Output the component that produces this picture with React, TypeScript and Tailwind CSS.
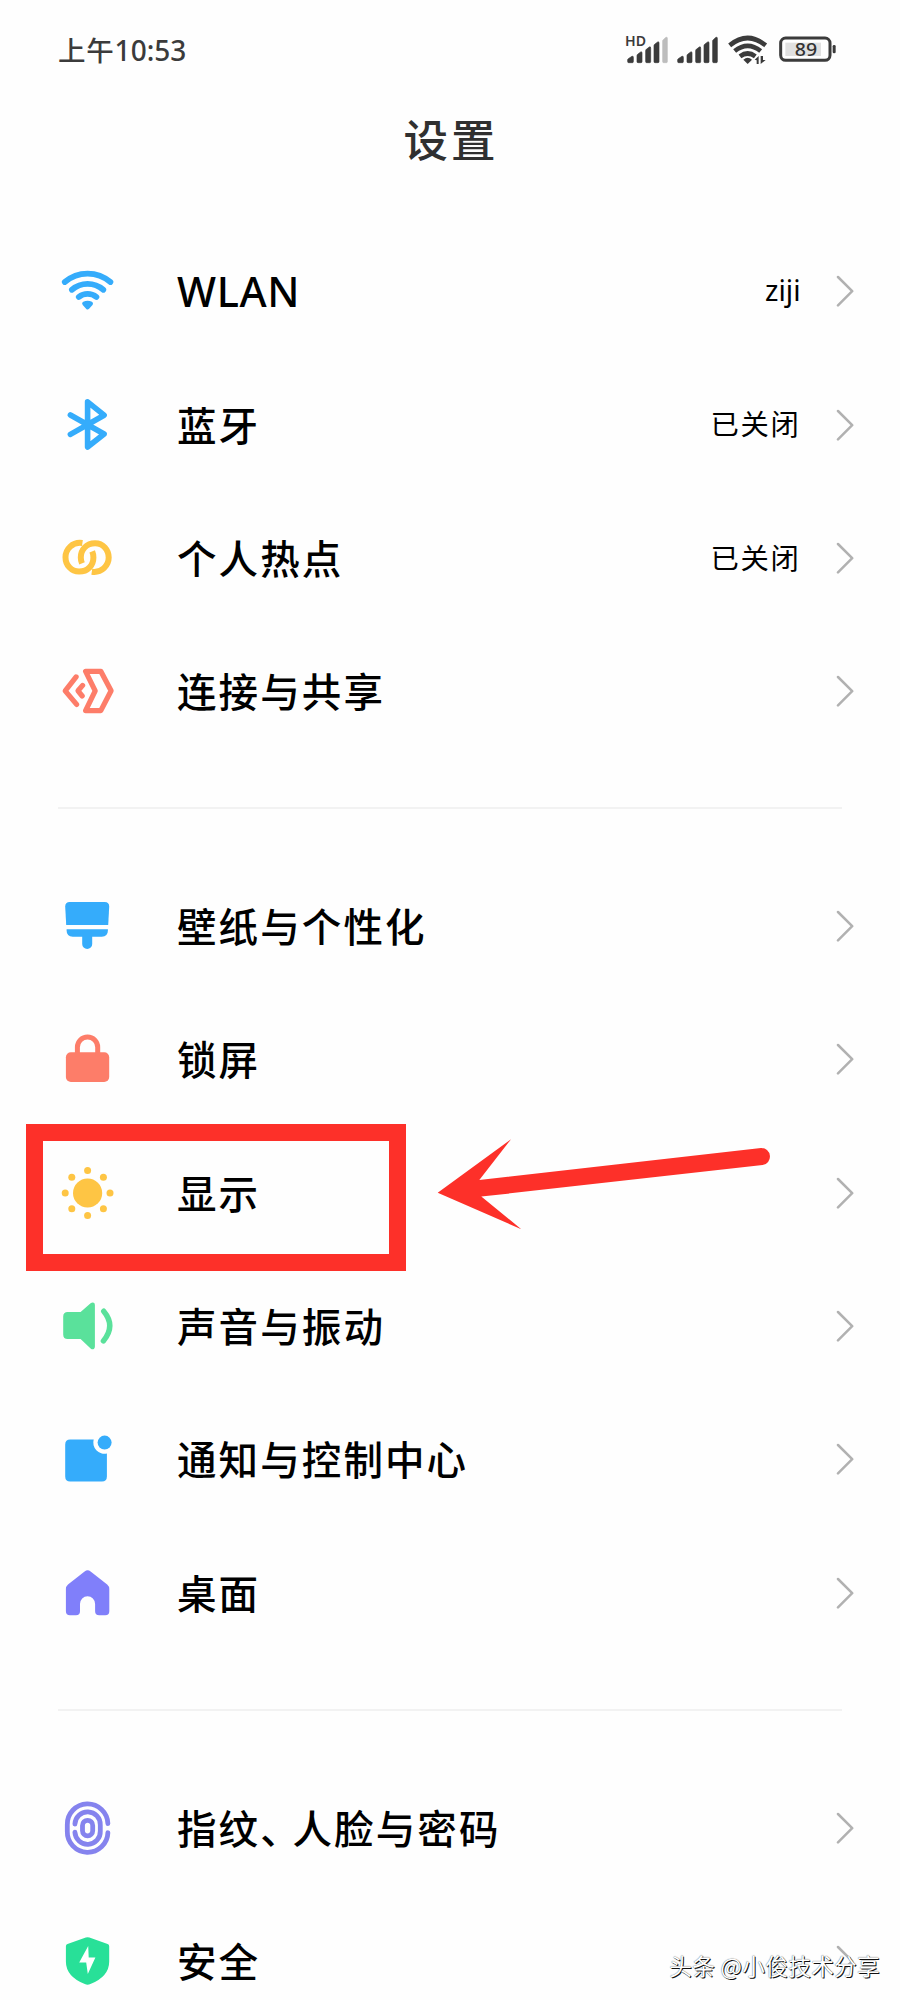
import type { ReactNode } from "react";

const BLUE = "#35acfb";
const YELLOW = "#fec544";
const CORAL = "#fd7d69";
const VIOLET = "#807ffa";

function Icon({ children }: { children: ReactNode }) {
  return (
    <svg className="h-[60px] w-[60px] shrink-0" viewBox="-30.4 -30 60 60" fill="none" strokeLinecap="round" strokeLinejoin="round">
      {children}
    </svg>
  );
}

const WifiIcon = () => (
  <Icon>
    <g stroke={BLUE} strokeWidth="5.8">
      <path d="M-22.6 -9A35 35 0 0 1 23 -9" />
      <path d="M-15.5 -1.2A24 24 0 0 1 15.9 -1.2" />
      <path d="M-8.6 6A14 14 0 0 1 9 6" />
    </g>
    <path d="M-3.2 12.6Q0.2 10.8 3.6 12.6L0.2 16.4Z" fill={BLUE} stroke={BLUE} strokeWidth="4" />
  </Icon>
);

const BluetoothIcon = () => (
  <Icon>
    <path d="M-17 -10L16.7 9L0.2 22V-23.2L16.7 -9.8L-17 9.4" stroke={BLUE} strokeWidth="5.6" />
  </Icon>
);

const HotspotIcon = () => (
  <Icon>
    <g stroke={YELLOW} strokeWidth="6" strokeLinecap="butt">
      <path d="M-5 -15C-15 -16.5 -21.9 -8.5 -21.9 -0.8C-21.9 7 -16.2 13.6 -8.3 13.6C0.6 13.6 6 7 6 -0.6Q6 -3.8 4.8 -6.6" />
      <path d="M4.4 13.8C14.4 15.3 21.3 7.3 21.3 -0.4C21.3 -8.2 15.6 -14.8 7.7 -14.8C-1.2 -14.8 -6.6 -8.2 -6.6 -0.6Q-6.6 2.6 -5.4 5.4" />
    </g>
  </Icon>
);

const ShareIcon = () => (
  <Icon>
    <g stroke={CORAL} strokeWidth="5.2">
      <path d="M-11.3 -14.1L-22.2 -0.2L-10.8 13.4" />
      <path d="M-4.8 -5.6L-9.4 -0.2L-5.2 5" />
      <path d="M-1.8 -19.7H13.4L23.7 -0.2L13.4 19.6H-1.8L7.8 -0.2Z" />
    </g>
  </Icon>
);

const BrushIcon = () => (
  <Icon>
    <g fill={BLUE}>
      <path d="M-22.2 -19.6Q-22.2 -24.1 -17.7 -24.1H17.3Q21.8 -24.1 21.8 -19.6L20.8 -1.1H-21.2Z" />
      <path d="M-20.8 3.2H20.5V4.6Q20.5 10.7 14.4 10.7H4.8V17.9A5 5 0 0 1 -5.2 17.9V10.7H-14.7Q-20.8 10.7 -20.8 4.6Z" />
    </g>
  </Icon>
);

const LockIcon = () => (
  <Icon>
    <rect x="-21.5" y="-6.7" width="43.3" height="29.6" rx="5" fill={CORAL} />
    <path d="M-10 -5V-11.8A10.1 10.1 0 0 1 10.3 -11.8V-5" stroke={CORAL} strokeWidth="5" />
  </Icon>
);

const SUN_DOTS = [
  [0, -22.4], [15.8, -15.8], [22.4, 0], [15.8, 15.8], [0, 22.4], [-15.8, 15.8], [-22.4, 0], [-15.8, -15.8],
];

const SunIcon = () => (
  <Icon>
    <g fill={YELLOW}>
      <circle cx="0.2" cy="0" r="14.6" />
      {SUN_DOTS.map(([x, y]) => (
        <circle key={`${x},${y}`} cx={x + 0.2} cy={y} r="3.5" />
      ))}
    </g>
  </Icon>
);

const SoundIcon = () => (
  <Icon>
    <path
      d="M-24.2 -9.5Q-24.2 -14 -19.7 -14H-6.8L3.2 -22.8Q5 -24.2 6.4 -23.2Q7.5 -22.6 7.5 -21V20.6Q7.5 22.4 6.4 23Q5 23.8 3.2 22.4L-6.8 13H-19.7Q-24.2 13 -24.2 8.5Z"
      fill="#5ae19b"
    />
    <path d="M16.3 -14.8Q28.6 -0.2 16 14.9" stroke="#5ae19b" strokeWidth="5.4" />
  </Icon>
);

const NotificationIcon = () => (
  <Icon>
    <path
      d="M-17.2 -19.4H6.3A11.2 11.2 0 0 0 19.5 -5.4V17.6Q19.5 22.6 14.5 22.6H-17.2Q-22.2 22.6 -22.2 17.6V-14.4Q-22.2 -19.4 -17.2 -19.4Z"
      fill={BLUE}
    />
    <circle cx="17.2" cy="-16.4" r="7" fill={BLUE} />
  </Icon>
);

const HomeIcon = () => (
  <Icon>
    <path
      d="M-2.8 -21.6Q0.2 -23.8 3.2 -21.6L19.8 -8.6Q21.9 -6.8 21.9 -4V18.3Q21.9 22.3 17.9 22.3H11.8Q7.7 22.3 7.7 18.3V11A7.5 7.7 0 0 0 -7.4 11V18.3Q-7.4 22.3 -11.4 22.3H-17.5Q-21.5 22.3 -21.5 18.3V-4Q-21.5 -6.8 -19.4 -8.6Z"
      fill={VIOLET}
    />
  </Icon>
);

const FingerprintIcon = () => (
  <Icon>
    <g stroke="#8583ee" strokeWidth="4.8">
      <path d="M20.5 -4.4A20.3 20.3 0 0 0 -20.1 -3.2V3.4A20.3 20.3 0 0 0 20.5 4.6" />
      <path d="M-12.5 -3.9A12.7 12.7 0 0 1 12.9 -2.9V3A12.7 12.7 0 0 1 -12.5 4.2" />
      <rect x="-4.9" y="-7.7" width="10.2" height="15.6" rx="5.1" />
    </g>
  </Icon>
);

const ShieldIcon = () => (
  <Icon>
    <path
      d="M-1.6 -23.4Q0.2 -24.2 2 -23.4L20.2 -17Q21.8 -16.4 21.8 -14.8V0.5Q21.8 15.5 3 23.1Q0.2 24.4 -2.6 23.1Q-21.5 15.5 -21.5 0.5V-14.8Q-21.5 -16.4 -19.9 -17Z"
      fill="#28e098"
    />
    <path d="M0.8 -15L-8.2 1.4H-1.2L0.4 13L8 -3.4H1.3Z" fill="#fdfffe" />
  </Icon>
);

const Chevron = () => (
  <svg className="h-8 w-[18px] shrink-0" viewBox="0 0 18 32" fill="none">
    <path d="M2 2L16.2 16.2L2 30.4" stroke="#b1b1b1" strokeWidth="2.5" strokeLinecap="round" strokeLinejoin="round" />
  </svg>
);

interface RowProps {
  icon: ReactNode;
  label: ReactNode;
  value?: ReactNode;
}

function Row({ icon, label, value }: RowProps) {
  return (
    <li className="flex h-[133.3px] items-center pr-[46.5px] pl-[57px]">
      {icon}
      <div className="-mt-0.5 ml-[60px] flex-1 text-[39.5px] leading-[60px] font-medium tracking-[2.1px] text-black">{label}</div>
      {value && <div className="-mt-0.5 mr-[35px] text-black">{value}</div>}
      <Chevron />
    </li>
  );
}

const Off = () => <span className="text-[28.3px] tracking-[1.7px]">已关闭</span>;

const Divider = () => <hr className="mr-[58px] ml-[58px] h-0.5 border-0 bg-[#f2f2f2]" />;

const BARS = [
  { x: 0, w: 17, top: 108 },
  { x: 28, w: 15, top: 95 },
  { x: 54, w: 15, top: 80 },
  { x: 79, w: 15, top: 65 },
  { x: 105, w: 14, top: 51 },
];

function Signal({ left, weak }: { left: number; weak?: boolean }) {
  return (
    <g>
      {BARS.map(({ x, w, top }, i) => (
        <path
          key={x}
          d={`M${left + x + 2} ${top + 8}L${left + x + w - 4} ${top + 1}Q${left + x + w} ${top - 1} ${left + x + w} ${top + 4}V125Q${left + x + w} 128 ${left + x + w - 3} 128H${left + x + 3}Q${left + x} 128 ${left + x} 125V${top + 12}Q${left + x} ${top + 9} ${left + x + 2} ${top + 8}Z`}
          fill={weak && i === 4 ? "#bdbdbd" : "#3b3b3b"}
          stroke={weak && i === 4 ? "#bdbdbd" : "#3b3b3b"}
          strokeWidth="2"
        />
      ))}
    </g>
  );
}

const StatusIcons = () => (
  <svg className="h-[60px] w-[260px]" viewBox="0 0 780 180" fill="none">
    <text x="75" y="77" fontSize="41" fontWeight="600" fill="#3b3b3b" textLength="63" lengthAdjust="spacingAndGlyphs" className="font-['Noto_Sans']">HD</text>
    <Signal left={83} weak />
    <Signal left={233} />
    <g stroke="#3b3b3b" strokeWidth="14">
      <path d="M389 76Q443 32 497 76" />
      <path d="M404 93Q443 62 482 93" />
      <path d="M420 109Q443 92 466 109" />
    </g>
    <path d="M430 119Q443 108 456 119L443 132Z" fill="#3b3b3b" />
    <path d="M464 119L476 108V132H470V121ZM482 108V132L497 120H489V108Z" fill="#3b3b3b" />
    <rect x="556" y="68" width="107" height="40" fill="#e0e0e0" />
    <rect x="542" y="54" width="148" height="67" rx="15" stroke="#3b3b3b" strokeWidth="9" />
    <rect x="698" y="75" width="9" height="25" rx="4" fill="#3b3b3b" />
    <text x="618" y="109" textAnchor="middle" fontSize="55" fontWeight="500" fill="#333" textLength="67" lengthAdjust="spacingAndGlyphs" className="font-['Noto_Sans']">89</text>
  </svg>
);

export default function App() {
  return (
    <div className="relative h-[2000px] w-[900px] overflow-hidden bg-[#fefefe] font-['Noto_Sans_CJK_SC',sans-serif]">
      <header className="h-[224.6px]">
        <div className="flex h-[100px] items-center justify-between pr-10 pl-[58px] text-[#3b3b3b]">
          <div className="-mt-[2px] flex items-baseline text-[27.5px] leading-[60px] font-medium">
            <span className="tracking-[0.8px]">上午</span>
            <span className="font-['Noto_Sans'] text-[28px] font-medium">10:53</span>
          </div>
          <StatusIcons />
        </div>
        <h1 className="mt-2 pl-0.5 text-center text-[44.5px] leading-[60px] font-medium tracking-[3px] text-[#303030]">设置</h1>
      </header>

      <ul>
        <Row
          icon={<WifiIcon />}
          label={<span className="font-['Noto_Sans'] text-[41.5px] tracking-[0.6px]">WLAN</span>}
          value={<span className="font-['Noto_Sans'] text-[28.5px]">ziji</span>}
        />
        <Row icon={<BluetoothIcon />} label="蓝牙" value={<Off />} />
        <Row icon={<HotspotIcon />} label="个人热点" value={<Off />} />
        <Row icon={<ShareIcon />} label="连接与共享" />
      </ul>

      <div className="flex h-[101.6px] flex-col justify-center pb-0.5">
        <Divider />
      </div>

      <ul>
        <Row icon={<BrushIcon />} label="壁纸与个性化" />
        <Row icon={<LockIcon />} label="锁屏" />
        <Row icon={<SunIcon />} label="显示" />
        <Row icon={<SoundIcon />} label="声音与振动" />
        <Row icon={<NotificationIcon />} label="通知与控制中心" />
        <Row icon={<HomeIcon />} label="桌面" />
      </ul>

      <div className="flex h-[101.9px] flex-col justify-center">
        <Divider />
      </div>

      <ul>
        <Row
          icon={<FingerprintIcon />}
          label={<>指纹<span className="tracking-[-7.2px]">、</span>人脸与密码</>}
        />
        <Row icon={<ShieldIcon />} label="安全" />
      </ul>

      <div className="absolute top-[1124px] left-[26px] h-[147px] w-[380px] border-[17px] border-[#fd3029]" />
      <svg className="absolute top-[1130px] left-[430px] h-[110px] w-[350px]" viewBox="430 1130 350 110">
        <path
          d="M437.7 1192.8L511 1139.3L479.3 1180L761 1148A8.6 8.6 0 0 1 762.6 1165.1L481.3 1196.6L521.3 1229.2Z"
          fill="#fd3029"
        />
      </svg>
      <div className="absolute right-[20px] bottom-[18px] text-[22.6px] leading-8 tracking-[0.35px] whitespace-nowrap text-white [text-shadow:1px_1px_0_#111,0_0_1px_#333]">
        头条 @小俊技术分享
      </div>
    </div>
  );
}
